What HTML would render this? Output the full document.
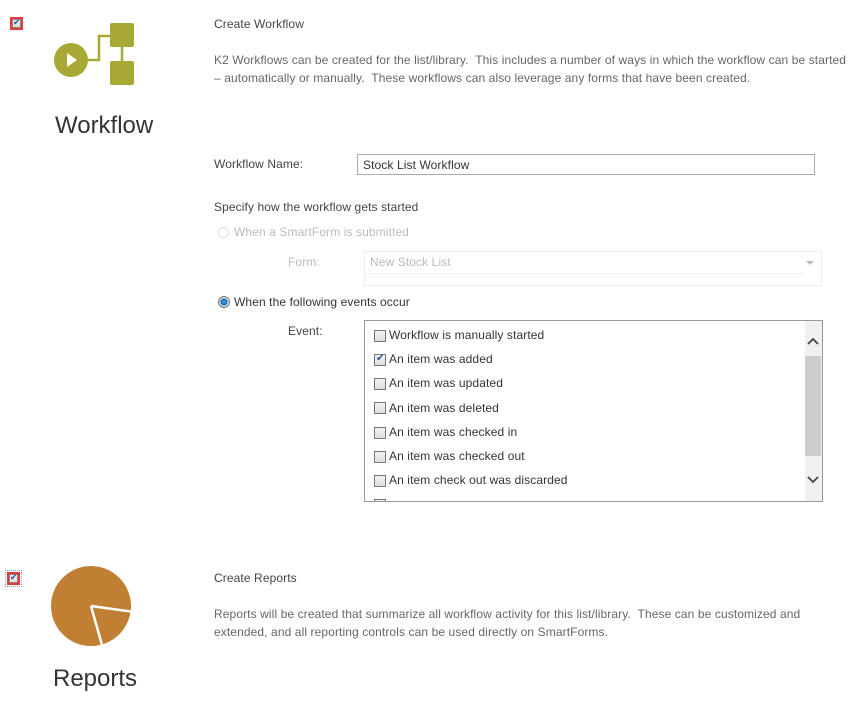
<!DOCTYPE html>
<html><head><style>
body{margin:0;width:857px;height:710px;background:#fff;font-family:"Liberation Sans",sans-serif;font-size:12px;color:#444;position:relative;overflow:hidden;letter-spacing:0.1px}
.a{position:absolute;white-space:nowrap}
.cb{position:absolute;width:11px;height:11px;border:1px solid #777;background:linear-gradient(#f2f2f2,#ddd);box-sizing:border-box}
.ck::after{content:"✔";position:absolute;left:1px;top:-2px;font-size:10px;color:#2d4f9e}
.red{position:absolute;width:13px;height:13px;background:#e63a3a;}
.red .cb{left:2px;top:2px;width:9px;height:9px}
.red .ck::after{left:0;top:-3px;font-size:9px}
</style></head><body>
<div class="red" style="left:10px;top:17px"><div class="cb ck" style="border-color:#888"></div></div>
<svg class="a" style="left:50px;top:20px" width="90" height="70">
<circle cx="21" cy="40" r="17" fill="#a8a935"/>
<polygon points="17,33 17,47 27,40" fill="#fff"/>
<path d="M38 40 H49 V16 H60 M72 27 V41" stroke="#a8a935" stroke-width="2.5" fill="none"/>
<rect x="60" y="3" width="24" height="24" rx="2" fill="#a8a935"/>
<rect x="60" y="41" width="24" height="24" rx="2" fill="#a8a935"/>
</svg>
<div class="a" style="left:55px;top:112px;font-size:24px;color:#333;letter-spacing:0">Workflow</div>
<div class="a" style="left:214px;top:17px">Create Workflow</div>
<div class="a" style="left:214px;top:53px;color:#666">K2 Workflows can be created for the list/library.&nbsp; This includes a number of ways in which the workflow can be started</div>
<div class="a" style="left:214px;top:71px;color:#666">– automatically or manually.&nbsp; These workflows can also leverage any forms that have been created.</div>
<div class="a" style="left:214px;top:157px">Workflow Name:</div>
<div class="a" style="left:357px;top:154px;width:458px;height:21px;border:1px solid #aaa;box-sizing:border-box;padding:3px 5px;color:#333">Stock List Workflow</div>
<div class="a" style="left:214px;top:200px">Specify how the workflow gets started</div>
<div class="a" style="left:218px;top:227px;width:11px;height:11px;border-radius:50%;border:1px solid #ddd;box-sizing:border-box"></div>
<div class="a" style="left:234px;top:225px;color:#bbb">When a SmartForm is submitted</div>
<div class="a" style="left:288px;top:255px;color:#bbb">Form:</div>
<div class="a" style="left:364px;top:251px;width:458px;height:35px;border:1px solid #eee;box-sizing:border-box"></div>
<div class="a" style="left:364px;top:251px;width:440px;height:22px;border-bottom:1px solid #eee;"></div>
<div class="a" style="left:370px;top:255px;color:#bbb">New Stock List</div>
<div class="a" style="left:806px;top:261px;width:0;height:0;border-left:4px solid transparent;border-right:4px solid transparent;border-top:4px solid #bbb"></div>
<div class="a" style="left:218px;top:296px;width:12px;height:12px;border-radius:50%;border:1px solid #777;box-sizing:border-box;background:radial-gradient(circle,#4aa3e8 0,#1a6bb0 3px,#ddd 4px)"></div>
<div class="a" style="left:234px;top:295px;color:#333">When the following events occur</div>
<div class="a" style="left:288px;top:324px">Event:</div>
<div class="a" style="left:364px;top:320px;width:459px;height:182px;border:1px solid #999;box-sizing:border-box;overflow:hidden">
<div class="a" style="left:440px;top:0;width:17px;height:180px;background:#f0f0f0"></div>
<div class="a" style="left:440px;top:35px;width:16px;height:100px;background:#cdcdcd"></div>
<svg class="a" style="left:442px;top:16px" width="12" height="8"><path d="M1 7 L6 2 L11 7" stroke="#444" stroke-width="1.8" fill="none"/></svg>
<svg class="a" style="left:442px;top:155px" width="12" height="8"><path d="M1 1 L6 6 L11 1" stroke="#444" stroke-width="1.8" fill="none"/></svg>
<div class="cb" style="left:9px;top:178px;width:12px;height:12px"></div>
</div>
<div class="cb" style="left:374px;top:330px;width:12px;height:12px"></div><div class="a" style="left:389px;top:328px;color:#333">Workflow is manually started</div>
<div class="cb ck" style="left:374px;top:354px;width:12px;height:12px"></div><div class="a" style="left:389px;top:352px;color:#333">An item was added</div>
<div class="cb" style="left:374px;top:378px;width:12px;height:12px"></div><div class="a" style="left:389px;top:376px;color:#333">An item was updated</div>
<div class="cb" style="left:374px;top:402px;width:12px;height:12px"></div><div class="a" style="left:389px;top:401px;color:#333">An item was deleted</div>
<div class="cb" style="left:374px;top:427px;width:12px;height:12px"></div><div class="a" style="left:389px;top:425px;color:#333">An item was checked in</div>
<div class="cb" style="left:374px;top:451px;width:12px;height:12px"></div><div class="a" style="left:389px;top:449px;color:#333">An item was checked out</div>
<div class="cb" style="left:374px;top:475px;width:12px;height:12px"></div><div class="a" style="left:389px;top:473px;color:#333">An item check out was discarded</div>
<div class="a" style="left:5px;top:570px;width:17px;height:17px;border:1px dotted #8ab;box-sizing:border-box"></div>
<div class="red" style="left:7px;top:572px"><div class="cb ck" style="border-color:#888"></div></div>
<svg class="a" style="left:50px;top:565px" width="85" height="85">
<circle cx="41" cy="41" r="40" fill="#c07f33"/>
<path d="M41 41 L84 47 M41 41 L52 80" stroke="#fff" stroke-width="2.5" fill="none"/>
</svg>
<div class="a" style="left:53px;top:665px;font-size:24px;color:#333;letter-spacing:0">Reports</div>
<div class="a" style="left:214px;top:571px">Create Reports</div>
<div class="a" style="left:214px;top:607px;color:#666">Reports will be created that summarize all workflow activity for this list/library.&nbsp; These can be customized and</div>
<div class="a" style="left:214px;top:625px;color:#666">extended, and all reporting controls can be used directly on SmartForms.</div>
</body></html>
